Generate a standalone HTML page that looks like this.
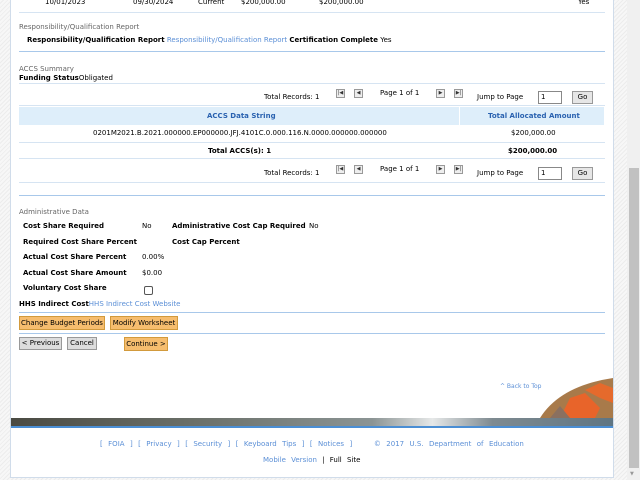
<!DOCTYPE html>
<html><head><style>
body{margin:0;width:640px;height:480px;overflow:hidden;position:relative;font-family:"DejaVu Sans","Liberation Sans",sans-serif;font-size:7px;color:#000;
background:repeating-linear-gradient(135deg,#f7f7f7 0,#f7f7f7 2px,#ececec 2px,#ececec 3px);}
.a{position:absolute;white-space:nowrap}
#c{position:absolute;left:10px;top:0;width:602px;height:477px;background:#fff;border-left:1px solid #d0dcea;border-right:1px solid #d0dcea;border-bottom:1px solid #d0dcea}
.hl{position:absolute;height:1px;background:#a8c8ea}
.hl2{position:absolute;height:1px;background:#d6e4f2}
.g{color:#666}
.b{font-weight:bold}
.lk{color:#5b8fd6}
.nav{position:absolute;width:7px;height:7px;border:1px solid #999;background:#eee;font-size:5px;line-height:7px;text-align:center;color:#333}
.inp{position:absolute;width:20px;height:11px;border:1px solid #888;background:#fff;font-size:7px;line-height:11px;padding-left:2px}
.btn{position:absolute;height:11px;border:1px solid #999;background:#e6e6e6;font-size:7px;line-height:11px;text-align:center}
.ob{position:absolute;height:12px;border:1px solid #d29a3c;background:#f6bd6e;font-size:7px;line-height:12px;text-align:center;white-space:nowrap;overflow:hidden}
.gb{position:absolute;height:11px;border:1px solid #999;background:#ddd;font-size:7px;line-height:11px;text-align:center;white-space:nowrap;overflow:hidden}
</style></head><body>
<div id="c"></div>
<div class="a" style="left:45px;top:-2px">10/01/2023</div>
<div class="a" style="left:133px;top:-2px">09/30/2024</div>
<div class="a" style="left:198px;top:-2px">Current</div>
<div class="a" style="left:241px;top:-2px">$200,000.00</div>
<div class="a" style="left:319px;top:-2px">$200,000.00</div>
<div class="a" style="left:578px;top:-2px">Yes</div>
<div class="hl2" style="left:19px;top:12px;width:586px"></div>
<div class="a g" style="left:19px;top:23px">Responsibility/Qualification Report</div>
<div class="a" style="left:27px;top:36px"><span class="b">Responsibility/Qualification Report</span> <span class="lk">Responsibility/Qualification Report</span> <span class="b">Certification Complete</span> Yes</div>
<div class="hl" style="left:19px;top:51px;width:586px"></div>
<div class="a g" style="left:19px;top:65px">ACCS Summary</div>
<div class="a" style="left:19px;top:74px"><span class="b">Funding Status</span>Obligated</div>
<div class="hl2" style="left:19px;top:83px;width:586px"></div>
<div class="a" style="left:264px;top:93px">Total Records: 1</div>
<div class="nav" style="left:336px;top:89px">|◀</div>
<div class="nav" style="left:354px;top:89px">◀</div>
<div class="a" style="left:380px;top:89px">Page 1 of 1</div>
<div class="nav" style="left:436px;top:89px">▶</div>
<div class="nav" style="left:454px;top:89px">▶|</div>
<div class="a" style="left:477px;top:93px">Jump to Page</div>
<div class="inp" style="left:538px;top:91px">1</div>
<div class="btn" style="left:572px;top:91px;width:19px">Go</div>
<div class="hl2" style="left:19px;top:105px;width:586px"></div>
<div style="position:absolute;left:19px;top:107px;width:585px;height:18px;background:#deeefa"></div>
<div style="position:absolute;left:459px;top:107px;width:1px;height:18px;background:#fff"></div>
<div class="a b" style="left:207px;top:112px;color:#2a62b0">ACCS Data String</div>
<div class="a b" style="left:488px;top:112px;color:#2a62b0">Total Allocated Amount</div>
<div class="a" style="left:93px;top:129px">0201M2021.B.2021.000000.EP000000.JFJ.4101C.0.000.116.N.0000.000000.000000</div>
<div class="a" style="left:511px;top:129px">$200,000.00</div>
<div class="hl2" style="left:19px;top:142px;width:586px"></div>
<div class="a b" style="left:208px;top:147px">Total ACCS(s): 1</div>
<div class="a b" style="left:508px;top:147px">$200,000.00</div>
<div class="hl2" style="left:19px;top:158px;width:586px"></div>
<div class="a" style="left:264px;top:169px">Total Records: 1</div>
<div class="nav" style="left:336px;top:165px">|◀</div>
<div class="nav" style="left:354px;top:165px">◀</div>
<div class="a" style="left:380px;top:165px">Page 1 of 1</div>
<div class="nav" style="left:436px;top:165px">▶</div>
<div class="nav" style="left:454px;top:165px">▶|</div>
<div class="a" style="left:477px;top:169px">Jump to Page</div>
<div class="inp" style="left:538px;top:167px">1</div>
<div class="btn" style="left:572px;top:167px;width:19px">Go</div>
<div class="hl2" style="left:19px;top:182px;width:586px"></div>
<div class="hl" style="left:19px;top:195px;width:586px"></div>
<div class="a g" style="left:19px;top:208px">Administrative Data</div>
<div class="a b" style="left:23px;top:222px">Cost Share Required</div>
<div class="a" style="left:142px;top:222px">No</div>
<div class="a b" style="left:172px;top:222px">Administrative Cost Cap Required</div>
<div class="a" style="left:309px;top:222px">No</div>
<div class="a b" style="left:23px;top:238px">Required Cost Share Percent</div>
<div class="a b" style="left:172px;top:238px">Cost Cap Percent</div>
<div class="a b" style="left:23px;top:253px">Actual Cost Share Percent</div>
<div class="a" style="left:142px;top:253px">0.00%</div>
<div class="a b" style="left:23px;top:269px">Actual Cost Share Amount</div>
<div class="a" style="left:142px;top:269px">$0.00</div>
<div class="a b" style="left:23px;top:284px">Voluntary Cost Share</div>
<div style="position:absolute;left:144px;top:286px;width:7px;height:7px;border:1px solid #555;border-radius:2px;background:#fff"></div>
<div class="a" style="left:19px;top:300px"><span class="b">HHS Indirect Cost</span><span class="lk">HHS Indirect Cost Website</span></div>
<div class="hl" style="left:19px;top:312px;width:586px"></div>
<div class="ob" style="left:19px;top:316px;width:84px">Change Budget Periods</div>
<div class="ob" style="left:110px;top:316px;width:66px">Modify Worksheet</div>
<div class="hl" style="left:19px;top:333px;width:586px"></div>
<div class="gb" style="left:19px;top:337px;width:41px">&lt; Previous</div>
<div class="gb" style="left:67px;top:337px;width:28px">Cancel</div>
<div class="ob" style="left:124px;top:337px;width:42px">Continue &gt;</div>
<div class="a lk" style="left:500px;top:383px;font-size:6px">^ Back to Top</div>
<svg style="position:absolute;left:540px;top:378px" width="73" height="40"><path d="M0 40 Q20 8 73 0 L73 40Z" fill="#a87a4a"/><path d="M20 40 L30 20 L45 15 L60 30 L55 40Z" fill="#e8642a"/><path d="M45 12 L60 5 L73 10 L73 25 L60 20Z" fill="#e56a2c"/><path d="M10 40 L20 28 L30 40Z" fill="#8a7060"/></svg>
<div style="position:absolute;left:11px;top:418px;width:602px;height:8px;background:linear-gradient(90deg,#4a4a42,#6a6f68 30%,#8b9494 60%,#e6e8e8 70%,#7e8a90 80%,#5f7582)"></div>
<div style="position:absolute;left:11px;top:426px;width:602px;height:2px;background:#4a8ed4"></div>
<div class="a lk" style="left:100px;top:440px;word-spacing:3.2px">[ FOIA ] [ Privacy ] [ Security ] [ Keyboard Tips ] [ Notices ] &nbsp;&nbsp; © 2017 U.S. Department of Education</div>
<div class="a" style="left:263px;top:456px;word-spacing:3px"><span class="lk">Mobile Version</span> | Full Site</div>
<div style="position:absolute;left:627px;top:0;width:13px;height:480px;background:#f0f0f0"></div>
<div style="position:absolute;left:629px;top:168px;width:10px;height:300px;background:#c1c1c1"></div>
<div class="a" style="left:630px;top:471px;font-size:5px;color:#999">▼</div>
</body></html>
